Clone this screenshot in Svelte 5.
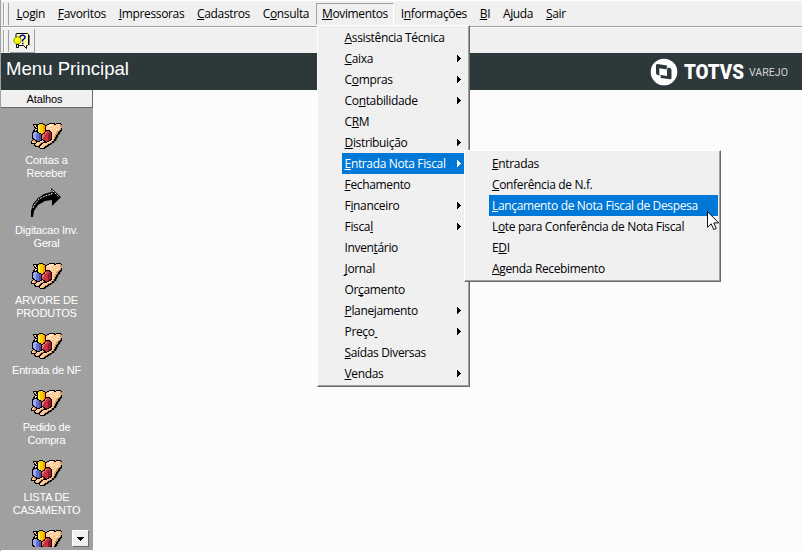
<script>
  // An & in a label marks the accelerator letter that follows it.
  const menuBar = [
    '&Login', '&Favoritos', '&Impressoras', '&Cadastros', 'C&onsulta',
    '&Movimentos', 'I&nformações', '&BI', 'A&juda', '&Sair'
  ];
  const openMenu = '&Movimentos';

  const menu = [
    {label: '&Assistência Técnica'},
    {label: '&Caixa', more: true},
    {label: 'C&ompras', more: true},
    {label: 'Co&ntabilidade', more: true},
    {label: 'C&RM'},
    {label: '&Distribuição', more: true},
    {label: '&Entrada Nota Fiscal', more: true, active: true},
    {label: '&Fechamento'},
    {label: 'F&inanceiro', more: true},
    {label: 'Fisca&l', more: true},
    {label: 'Inven&tário'},
    {label: '&Jornal'},
    {label: 'Or&çamento'},
    {label: '&Planejamento', more: true},
    {label: 'Preço& ', more: true},
    {label: '&Saídas Diversas'},
    {label: '&Vendas', more: true}
  ];

  const submenu = [
    {label: '&Entradas'},
    {label: '&Conferência de N.f.'},
    {label: '&Lançamento de Nota Fiscal de Despesa', active: true},
    {label: 'L&ote para Conferência de Nota Fiscal'},
    {label: 'E&DI'},
    {label: '&Agenda Recebimento'}
  ];

  const shortcuts = [
    {lines: ['Contas a', 'Receber']},
    {lines: ['Digitacao Inv.', 'Geral'], icon: 'arrow'},
    {lines: ['ARVORE DE', 'PRODUTOS']},
    {lines: ['Entrada de NF']},
    {lines: ['Pedido de', 'Compra']},
    {lines: ['LISTA DE', 'CASAMENTO']},
    {lines: []}
  ];

  // Pixels of the hand icon, one letter per colour.
  const colors = {
    k: '#000', p: '#ffcc99', l: '#fff3e4', d: '#cc9966', s: '#777',
    y: '#ffcc00', Y: '#ffee44', o: '#ff9900',
    b: '#6670cc', B: '#a0a6f0', n: '#4650a0',
    r: '#c83040', R: '#981828', q: '#f07878'
  };
  const handRows = [
    '........kkkk......kkkkkk.kkkkk..',
    '..kkkkkkyyyykk..kkppllpkkppppdk.',
    '..kppkkYyyyyyokkpplllppppppppddk',
    '...kpkkYYyyyookppllppppppplppddk',
    '...kkpkYYyyyookpppppppplppppppdk',
    '....kkkYYyyyookppppllppppppppdk.',
    '...kppkYYyyyookppppppppppllppdk.',
    '..kkpkkYYyyyookkkkkppppppppddkk.',
    '..kkkkkYYyyyookrrrkkppppppddkks.',
    '.kkBBBkkYyyyokqqrrrRkppppddkks..',
    '.kBBBBbbkkyokkqrrrRRkppppddkks..',
    '.kBBBbbbnnkkqqrrrRRRkpppddkks...',
    '.kBBBbbbnnkqqrrrrRRRkpppdkks....',
    '.kBBBbbbnnkqqrrrrRRRkppddkks....',
    '.kBBBbbbnnkqrrrrrRRRkppdkks.....',
    '.kkBBbbbnnkqrrrrrRRRkppdkks.....',
    '..kkBbbbnnkkrrrrrRRkkpdkks......',
    '.kpdkkbbnkkpkkrrrRkkppdkks......',
    'kppddkkkkpppdkkrkkppdkks........',
    'kpppdkppppddkkkkppppdkks........',
    'kkkkkppppdkkpppppddkks..........',
    '...kppppdkkpppppdkkks...........',
    '...kkppdkkppppddkks.............',
    '....kkkkkppppdkkks..............',
    '........kpppdkks................',
    '.........kkkkks.................'
  ];
  const handPaths = Object.keys(colors).map(key => {
    let d = '';
    handRows.forEach((row, y) => {
      [...row].forEach((c, x) => {
        if (c === key) d += `M${x} ${y}h1v1h-1z`;
      });
    });
    return {d, fill: colors[key]};
  });

  function split(label) {
    const i = label.indexOf('&');
    return [label.slice(0, i), label[i + 1].replace(' ', '\u00a0'), label.slice(i + 2)];
  }
</script>

{#snippet caption(label)}
  {@const [before, key, after] = split(label)}
  <span class="caption">{before}<u>{key}</u>{after}</span>
{/snippet}

{#snippet items(list)}
  {#each list as item}
    <li class:active={item.active}>
      {@render caption(item.label)}
      {#if item.more}
        <svg class="more" width="4" height="7" viewBox="0 0 4 7"><path d="M0 0h1v1h1v1h1v1h1v1h-1v1h-1v1h-1v1h-1z" /></svg>
      {/if}
    </li>
  {/each}
{/snippet}

{#snippet hand()}
  <svg width="32" height="32" viewBox="-1 -6 32 32" shape-rendering="crispEdges">
    {#each handPaths as path}<path d={path.d} fill={path.fill} />{/each}
  </svg>
{/snippet}

{#snippet arrow()}
  <svg width="32" height="32" viewBox="0 0 32 32">
    <path d="M1 30V24L3 17 8 11 14 7 21 5V1l10 9-9 9v-6l-7 1-7 4-4 6-1 6z" />
    <path d="M3 21l2-4 4-5 6-3 7-2V3l7 7" fill="none" stroke="#fff" stroke-width=".9" stroke-dasharray="2 1" />
  </svg>
{/snippet}

<div class="window">
  <nav class="menu-bar">
    <i class="grip"></i>
    {#each menuBar as label}
      <div class="bar-item" class:open={label === openMenu}>
        {@render caption(label)}
        {#if label === openMenu}
          <ul class="popup main">{@render items(menu)}</ul>
        {/if}
      </div>
    {/each}
  </nav>

  <div class="tool-bar">
    <i class="grip"></i>
    <button class="tool" aria-label="Ajuda">
      <svg width="17" height="18" viewBox="0 0 17 18">
        <path d="M3.5 1.5h11l1 1v10l-1 1h-1v3l-3-3h-5L3 9V2z" fill="#ffffb0" stroke="#000" />
        <path d="M15 3h1.5v10H15z" />
        <path d="M1 7l2-2h3l2 2v3l-2 2H3L1 10z" fill="#ffff00" stroke="#777700" stroke-width=".8" />
        <path d="M3.5 12.5h2v3h-2z" fill="#fff" stroke="#000" />
        <path d="M7 5.5 7.5 4 9 3.2h1.5L12 4.5V6L9.7 8v1.5M9 11.5h1.5" fill="none" stroke="#000099" stroke-width="1.5" />
      </svg>
    </button>
  </div>

  <header>
    <h1>Menu Principal</h1>
    <svg class="logo" width="140" height="28" viewBox="0 0 140 28">
      <circle cx="14" cy="14" r="13.3" fill="#fff" />
      <path d="M7.5 6 17 7.5V9.5l3 .5q1.500.3 1.500 2V20q0 1.500-1.500 1.300L10.500 20v-2.500L7.500 17Q6 16.700 6 15V7.500Q6 5.800 7.500 6z" fill="#2d383a" />
      <path d="M9.3 10.3l7.7 1.2v6.5l-7.7-1.2z" fill="#fff" />
      <path d="M17 9.5v2M10 17.3v3" stroke="#fff" stroke-width=".8" />
      <text class="brand" x="34" y="20.5" textLength="60" lengthAdjust="spacingAndGlyphs">TOTVS</text>
      <text class="product" x="99" y="17.5" textLength="39" lengthAdjust="spacingAndGlyphs">VAREJO</text>
    </svg>
  </header>

  <main>
    <aside>
      <h2>Atalhos</h2>
      <div class="shortcuts">
        {#each shortcuts as item}
          <div class="shortcut">
            {#if item.icon === 'arrow'}{@render arrow()}{:else}{@render hand()}{/if}
            <div class="name">
              {#each item.lines as line}<div>{line}</div>{/each}
            </div>
          </div>
        {/each}
      </div>
      <button class="scroll" aria-label="Mais atalhos">
        <svg width="7" height="4" viewBox="0 0 7 4"><path d="M0 0h7v1h-1v1h-1v1h-1v1h-1v-1h-1v-1h-1v-1h-1z" /></svg>
      </button>
    </aside>
  </main>

  <ul class="popup sub">{@render items(submenu)}</ul>

  <svg class="pointer" width="14" height="21" viewBox="0 0 14 21">
    <path d="M.5.7v15.6l3.7-3.5 2.5 5.8 2.6-1.1-2.5-5.6h5z" fill="#fff" stroke="#111" />
  </svg>
</div>

<style>
  :global(body) {
    margin: 0;
    overflow: hidden;
  }

  .window {
    position: relative;
    display: flex;
    flex-direction: column;
    box-sizing: border-box;
    width: 802px;
    height: 551px;
    border-left: 1px solid #a0a0a0;
    background: #fcfcfc;
    color: #000;
    font-family: 'Open Sans', 'Noto Sans', sans-serif;
    font-size: 12px;
    letter-spacing: -.35px;
    overflow: hidden;
  }

  .menu-bar,
  .tool-bar {
    display: flex;
    box-sizing: border-box;
    background: #f0f0f0;
  }

  .menu-bar {
    height: 27px;
    padding: 2px 0 0 2px;
    border-top: 1px solid #fff;
    border-bottom: 1px solid #a0a0a0;
  }

  .grip {
    box-sizing: border-box;
    width: 6px;
    height: 22px;
    margin-right: 1px;
    border: solid #a0a0a0;
    border-width: 0 1px;
    box-shadow: inset 1px 0 #fff, inset -2px 0 #f0f0f0;
  }

  .bar-item {
    position: relative;
    box-sizing: border-box;
    height: 22px;
    padding: 0 5.4px;
    border: 1px solid transparent;
    line-height: 20px;
  }

  .open {
    border-color: #a0a0a0 #fff transparent #a0a0a0;
  }

  .caption {
    white-space: pre;
  }

  u {
    text-decoration: underline 1px;
    text-underline-offset: 1px;
    text-decoration-skip-ink: none;
  }

  .tool-bar {
    height: 26px;
    padding: 2px 0 0 2px;
    border-top: 1px solid #fff;
  }

  .tool {
    display: flex;
    align-items: center;
    justify-content: center;
    width: 25px;
    height: 24px;
    margin-top: -1px;
    padding: 0 1px 0 0;
    border: solid #a0a0a0;
    border-width: 0 1px 1px 0;
    background: none;
  }

  header {
    display: flex;
    align-items: center;
    justify-content: space-between;
    height: 37px;
    padding: 0 12px 0 5px;
    background: #2d383a;
    color: #fff;
    letter-spacing: 0;
  }

  h1 {
    margin: 0 0 6px;
    font: 18.6px/22px 'Liberation Sans', Arial, sans-serif;
  }

  .logo text {
    fill: #fff;
    font-family: Roboto, sans-serif;
  }

  .logo .brand {
    font-size: 20px;
    font-weight: 900;
  }

  .logo .product {
    fill: #d0d5d6;
    font-size: 11.5px;
    font-weight: 400;
  }

  main {
    display: flex;
    flex: 1;
    min-height: 0;
  }

  aside {
    position: relative;
    display: flex;
    flex-direction: column;
    width: 92px;
    height: 460px;
    background: #a0a0a0;
    font: 11px/13px 'Liberation Sans', Arial, sans-serif;
  }

  h2 {
    box-sizing: border-box;
    height: 18px;
    margin: 0;
    padding-right: 4px;
    border: solid #696969;
    border-width: 0 1px 1px 0;
    background: #f0f0f0;
    font: inherit;
    line-height: 18px;
    letter-spacing: -.1px;
    text-align: center;
  }

  .shortcuts {
    height: 439px;
    padding: 9px 1px 0 0;
    box-sizing: border-box;
    overflow: hidden;
    color: #fff;
    letter-spacing: -.2px;
    text-align: center;
  }

  .shortcut {
    padding-bottom: 7px;
  }

  .shortcut svg {
    display: block;
    margin: 0 auto 5px 29px;
  }

  .scroll {
    position: absolute;
    left: 71px;
    top: 440px;
    width: 17px;
    height: 17px;
    display: flex;
    align-items: center;
    justify-content: center;
    padding: 0;
    border: 1px solid;
    border-color: #fff #696969 #696969 #fff;
    background: #f0f0f0;
  }

  .popup {
    position: absolute;
    z-index: 1;
    box-sizing: border-box;
    margin: 0;
    list-style: none;
    border: 1px solid;
    border-color: #fff #696969 #696969 #fff;
    background: #f0f0f0;
    box-shadow: inset -1px -1px #a0a0a0;
  }

  .main {
    left: 0;
    top: 21px;
    width: 153px;
    height: 362px;
    padding: 1px 5px 3px 24px;
  }

  .sub {
    left: 463px;
    top: 150px;
    width: 257px;
    height: 132px;
    padding: 2px 2px 2px 24px;
  }

  li {
    display: flex;
    align-items: center;
    justify-content: space-between;
    height: 21px;
    padding: 0 3px;
    line-height: 21px;
  }

  .active {
    background: #0078d7;
    color: #fff;
  }

  .more {
    fill: currentColor;
  }

  .pointer {
    position: absolute;
    z-index: 2;
    left: 706px;
    top: 211px;
  }
</style>
